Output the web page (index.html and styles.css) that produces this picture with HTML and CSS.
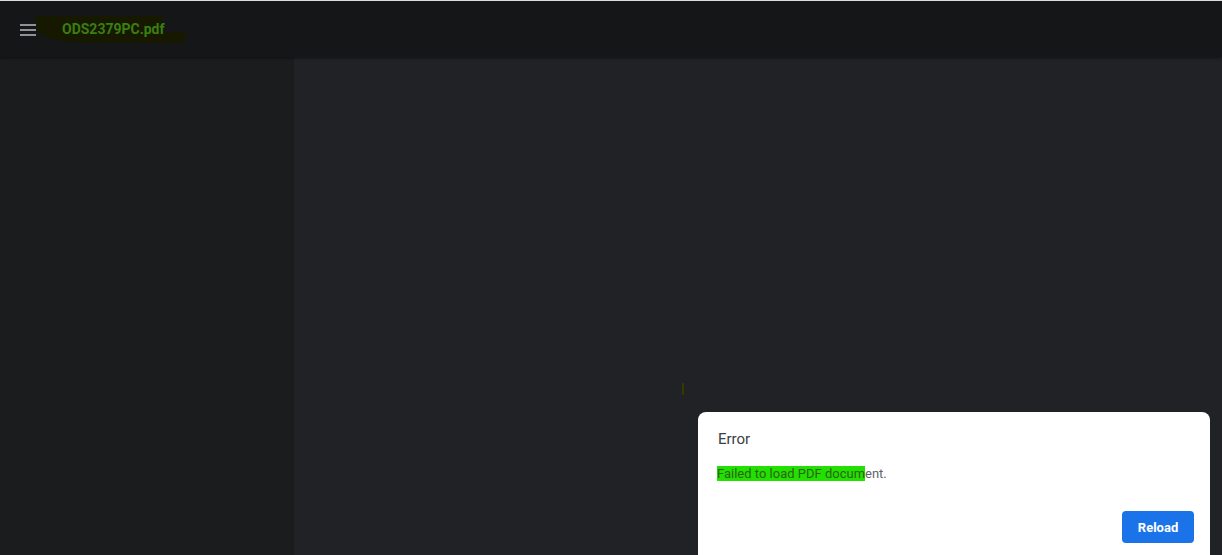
FILE: index.html
```html
<!DOCTYPE html>
<html lang="en">
<head>
<meta charset="utf-8">
<title>ODS2379PC.pdf</title>
<link rel="stylesheet" href="styles.css">
</head>
<body>
<div class="viewer">
  <header class="toolbar">
    <svg class="title-mark" width="150" height="28" viewBox="0 0 150 28"><path d="M0 0 H126 V16 H149 V27 H62 C40 27 10 24 4 17 C1 14 0 8 0 0 Z" fill="#161900"/></svg>
    <button class="menu-btn" aria-label="Menu">
      <svg width="16" height="12" viewBox="0 0 16 12"><rect x="0" y="0" width="16" height="2" fill="#8e9195"/><rect x="0" y="5" width="16" height="2" fill="#8e9195"/><rect x="0" y="10" width="16" height="2" fill="#8e9195"/></svg>
    </button>
    <span class="title">ODS2379PC.pdf</span>
  </header>
  <div class="body">
    <aside class="sidebar"></aside>
    <main class="content">
      <span class="caret"></span>
    </main>
  </div>
  <div class="dialog" role="alertdialog">
    <div class="dialog-title">Error</div>
    <div class="dialog-msg"><span class="mark">Failed to load PDF docum</span>ent.</div>
    <div class="dialog-actions">
      <button class="reload">Reload</button>
    </div>
  </div>
</div>
</body>
</html>
```
FILE: styles.css
```css
html, body {
  margin: 0;
  padding: 0;
  height: 100%;
  overflow: hidden;
}
body {
  font-family: Roboto, "Liberation Sans", Arial, sans-serif;
  background: #212225;
  border-top: 1px solid #dcdcdc;
  box-sizing: border-box;
}
.viewer {
  height: 100%;
  display: flex;
  flex-direction: column;
  position: relative;
}
.toolbar {
  height: 56px;
  flex: none;
  background: #151618;
  display: flex;
  align-items: center;
  padding-left: 20px;
  box-shadow: 0 1px 3px rgba(0,0,0,0.5);
  position: relative;
  z-index: 1;
}
/* dark smudge drawn behind the file name */
.title-mark {
  position: absolute;
  left: 36px;
  top: 15px;
}
.menu-btn {
  border: 0;
  background: none;
  padding: 0;
  width: 16px;
  height: 12px;
  display: block;
  margin-top: 1px;
  position: relative;
}
.menu-btn svg { display: block; }
.title {
  position: relative;
  margin-left: 26px;
  color: #3a7f10;
  font-weight: 700;
  font-size: 14px;
  margin-top: 0;
}
.body {
  flex: 1;
  display: flex;
}
.sidebar {
  width: 294px;
  flex: none;
  background: #1b1c1e;
}
.content {
  flex: 1;
  background: #212225;
  position: relative;
}
.caret {
  position: absolute;
  left: 388px;
  top: 326px;
  width: 2px;
  height: 12px;
  background: #3a3600;
}
.dialog {
  position: absolute;
  left: 698px;
  right: 12px;
  top: 411px;
  height: 160px;
  background: #fff;
  border-radius: 8px;
  padding: 17px 16px 0 20px;
  box-sizing: border-box;
}
.dialog-title {
  font-size: 15px;
  line-height: 20px;
  color: #3c4043;
}
.dialog-msg {
  margin-top: 17px;
  font-size: 13px;
  line-height: 16px;
  color: #5f6368;
  margin-left: -1px;
}
.mark {
  background: #22e000;
  color: #2f6418;
}
.dialog-actions {
  display: flex;
  justify-content: flex-end;
  margin-top: 29px;
}
.reload {
  width: 72px;
  height: 32px;
  border: 0;
  border-radius: 4px;
  background: #1a73e8;
  color: #fff;
  font-family: Roboto, "Liberation Sans", Arial, sans-serif;
  font-weight: 700;
  font-size: 13px;
  padding: 0;
}
```
